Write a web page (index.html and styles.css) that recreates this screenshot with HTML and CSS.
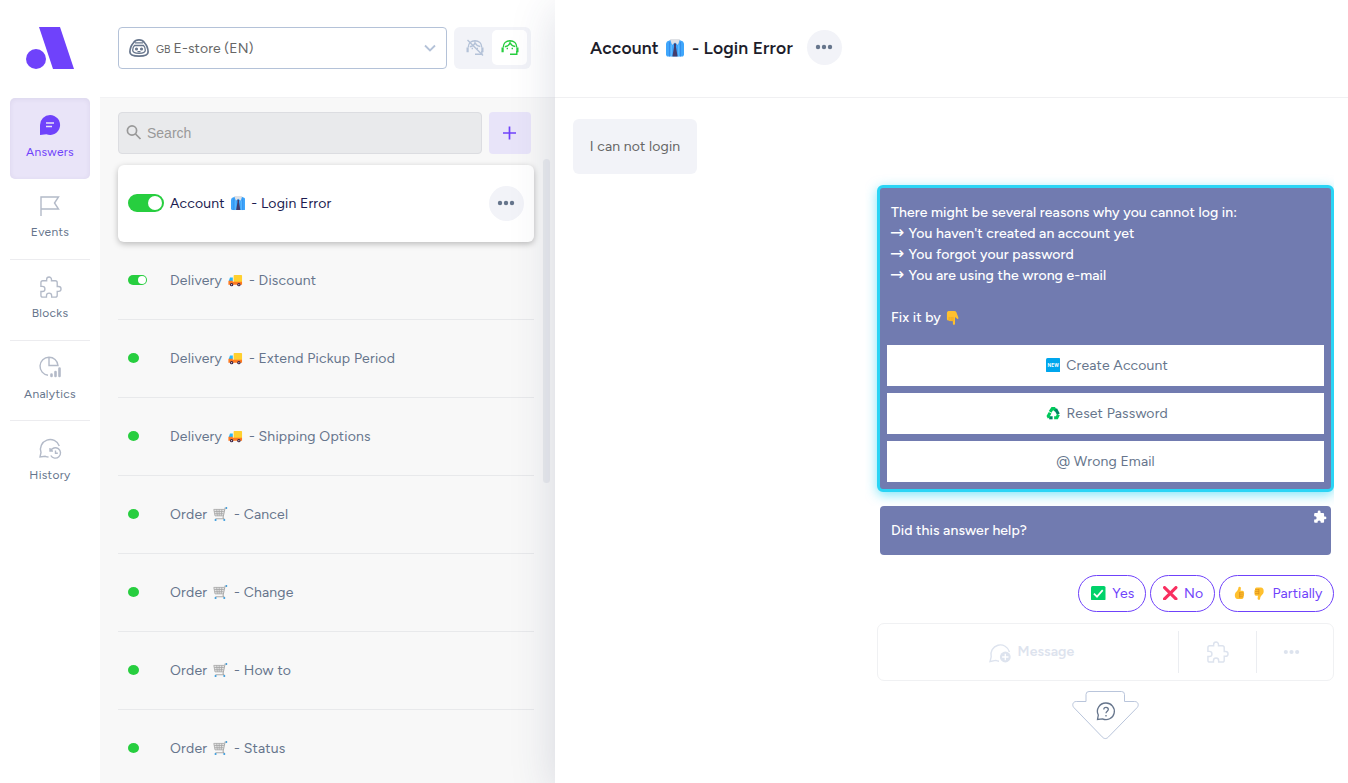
FILE: index.html
```html
<!DOCTYPE html>
<html lang="en">
<head>
    <meta charset="UTF-8">
    <meta name="viewport" content="width=device-width, initial-scale=1.0">
    <title>Answers - Account Login Error</title>
    <link rel="stylesheet" href="styles.css">
</head>
<body>
    <!-- Shared icons -->
    <svg class="sprite" aria-hidden="true">
        <symbol id="puzzle" viewBox="0 0 24 24">
            <path d="M20.5 11H19V7c0-1.1-.9-2-2-2h-4V3.500a2.500 2.500 0 0 0-5 0V5H4c-1.100 0-2 .9-2 2v3.800h1.500a2.700 2.700 0 0 1 0 5.400H2V20c0 1.100.9 2 2 2h3.800v-1.500a2.700 2.700 0 0 1 5.400 0V22H17c1.100 0 2-.9 2-2v-4h1.500a2.500 2.500 0 0 0 0-5z"/>
        </symbol>
        <symbol id="dots" viewBox="0 0 18 6">
            <circle cx="3" cy="3" r="2.200"/><circle cx="9" cy="3" r="2.200"/><circle cx="15" cy="3" r="2.200"/>
        </symbol>
        <symbol id="shirt" viewBox="0 0 18 18">
            <path fill="#3fa6fb" d="M1 2.500L4.500 1h9L17 2.500l1 2V16l-1 1.500H1L0 16V4.500z"/>
            <path stroke="#2f86e8" stroke-width=".8" d="M3.500 3v14.500M14.500 3v14.500"/>
            <path stroke="#71c6ff" stroke-width=".8" d="M5.300 6v11.500M12.700 6v11.500"/>
            <path fill="#dfe1e5" d="M4 0h10l-2 6-3-2.500L6 6z"/>
            <path fill="#453d6b" d="M7.900 4.500h2.200L9.900 7.500l1.700 10H6.400l1.700-10z"/>
        </symbol>
        <symbol id="truck" viewBox="0 0 18 16">
            <rect x="7" y="1.500" width="10.500" height="9.500" rx="1" fill="#ffd02f"/>
            <path fill="#29b6f6" d="M2.500 4.500H6V9H1z"/>
            <path fill="#ff7a21" d="M.5 8.500H6V10h11.500v3.500H.5z"/>
            <circle cx="4.500" cy="13.500" r="2.100" fill="#3b1e41"/><circle cx="13.500" cy="13.500" r="2.100" fill="#3b1e41"/>
            <circle cx="4.500" cy="13.500" r=".7" fill="#eee"/><circle cx="13.500" cy="13.500" r=".7" fill="#eee"/>
        </symbol>
        <symbol id="cart" viewBox="0 0 18 18">
            <path fill="#e4e4e4" d="M1 3h13l-1.500 8H2.500z"/>
            <path fill="none" stroke="#a5a5a5" stroke-width="1" d="M1 3h13M1.500 5.600h12M2 8.300h11M2.500 11h10M1 3l1.500 8M4.600 3l.8 8M7.700 3v8M11 3l-.8 8"/>
            <path fill="none" stroke="#aaa" stroke-width="1.300" d="M17 1.200h-2L12.500 13l1 1.700H3"/>
            <circle cx="3.200" cy="16.200" r="1.300" fill="#3a9bdc"/><circle cx="14" cy="16.200" r="1.300" fill="#3a9bdc"/><circle cx="16.800" cy="1.200" r="1.200" fill="#3a9bdc"/>
        </symbol>
        <symbol id="thumb" viewBox="0 0 16 18">
            <path fill="#ffc02e" d="M8.500.8c1.300 0 1.700 1.200 1.500 2.300L9.600 6H12c1.800 0 2 1.700 1.500 2.400.9.700.8 2 .1 2.500.6.800.3 2-.4 2.400.4 1-.4 2.700-2 2.700H6c-2.300 0-3.500-1.700-3.500-4.500 0-2.700 1.300-3.700 2.500-5C6.500 5 6.800 3.500 7 2c.1-.8.700-1.200 1.500-1.200z"/>
            <path fill="none" stroke="#d98a18" stroke-width=".9" d="M8.500 8.500h5M8.500 11h5M8.500 13.400h4.500M8.500 7.500v7"/>
        </symbol>
        <symbol id="headset" viewBox="0 0 18 18">
            <path d="M2.200 8.500C2.200 4.300 5.200 1.700 9 1.700s6.800 2.600 6.800 6.800M15.800 12v3.300H9M3.800 7.800c2.800-.4 4.500-1.800 5.200-4 1.200 2.300 3 3.500 5.300 3.700"/>
            <path stroke-width="2.200" d="M1.600 8.500v4.800M16.400 8.500v4.800"/>
            <path d="M6.300 8.800v1.500M11.300 8.800v1.500"/>
        </symbol>
    </svg>

    <div class="app">
        <!-- Main navigation -->
        <nav class="sidebar">
            <a href="#" class="logo">
                <svg width="48" height="42" viewBox="0 0 48 42" fill="#6f42fb"><circle cx="10" cy="32" r="10"/><path d="M13 0h21l14 42H27z"/></svg>
            </a>
            <a href="#" class="nav-item active">
                <svg width="22" height="22" viewBox="0 0 22 22"><path fill="#6f42fb" d="M11 1a10 10 0 1 1-3.600 19.300L1 21V11A10 10 0 0 1 11 1z"/><path class="lines" d="M7 9h8M7 12.500h6"/></svg>
                <span>Answers</span>
            </a>
            <a href="#" class="nav-item">
                <svg width="22" height="22" viewBox="0 0 22 22"><path d="M2 21V2h17.500l-4 6 4 6H2"/></svg>
                <span>Events</span>
            </a>
            <a href="#" class="nav-item">
                <svg width="23" height="23" viewBox="0 0 24 24"><use href="#puzzle"/></svg>
                <span>Blocks</span>
            </a>
            <a href="#" class="nav-item short">
                <svg width="22" height="22" viewBox="0 0 22 22"><path d="M9 19.200A9 9 0 1 1 19 9.500h-9V1.300"/><path stroke-width="2.600" stroke-linecap="round" d="M12.500 18.500v1.500M16.500 16v4M20.500 12.500V20"/></svg>
                <span>Analytics</span>
            </a>
            <a href="#" class="nav-item short">
                <svg width="24" height="24" viewBox="0 0 24 24"><path d="M10.500 21c-1.300 0-2.300-.3-3.200-.7L2 21l1-4.500A9.700 9.700 0 1 1 21.300 10M12 12v3h3M12.500 15a5.200 5.200 0 1 1 .3 4.500M17.500 14.500v2.700h2.300"/></svg>
                <span>History</span>
            </a>
        </nav>

        <!-- Answer list -->
        <section class="list-panel">
            <header class="list-header">
                <div class="bot-select">
                    <svg width="20" height="18" viewBox="0 0 20 18" fill="none" stroke="#66758c" stroke-width="1.700"><path d="M4.500 3.700C6 1.500 8 .9 10 .9s4 .6 5.500 2.800C17.500 6 19.100 9 19.100 13c0 3-3 4.100-9.100 4.100S.9 16 .9 13c0-4 1.600-7 3.600-9.300z"/><path stroke-width="1.300" d="M6 3.800h8M5.500 6.500h9c1.200 1 1.800 2.800 1.800 4.800 0 2.300-1.600 3-6.300 3s-6.300-.7-6.300-3c0-2 .6-3.800 1.800-4.800zM8.500 12.700h3"/><circle cx="7.500" cy="10" r=".7"/><circle cx="12.500" cy="10" r=".7"/></svg>
                    <span class="flag">GB</span>
                    <span class="bot-name">E-store (EN)</span>
                    <svg class="chevron" width="12" height="8" viewBox="0 0 12 8" fill="none" stroke="#b4c2d8" stroke-width="1.800"><path d="M1 1.500l5 5 5-5"/></svg>
                </div>
                <div class="live-toggle">
                    <button class="live-btn">
                        <svg width="18" height="18" viewBox="0 0 18 18"><use href="#headset"/><path d="M1.500 1l15.500 15.500"/></svg>
                    </button>
                    <button class="live-btn on">
                        <svg width="18" height="18"><use href="#headset"/></svg>
                    </button>
                </div>
            </header>

            <div class="search-row">
                <div class="search-box">
                    <svg width="16" height="16" viewBox="0 0 16 16" fill="none" stroke="#999" stroke-width="1.700"><circle cx="6" cy="5.500" r="4.600"/><path d="M9.500 9l5 5"/></svg>
                    <span>Search</span>
                </div>
                <button class="add-btn"><svg width="14" height="14" viewBox="0 0 14 14" stroke="#6f42fb" stroke-width="1.700"><path d="M6.500 .5v13M0 7h13"/></svg></button>
            </div>

            <div class="list-scroll">
                <div class="answer-list">
                    <div class="answer selected">
                        <div class="status"><i class="switch"></i></div>
                        <span>Account <svg class="emoji"><use href="#shirt"/></svg> - Login Error</span>
                        <button class="more-btn"><svg width="18" height="6"><use href="#dots"/></svg></button>
                    </div>
                    <div class="answer">
                        <div class="status"><i class="switch small"></i></div>
                        <span>Delivery <svg class="emoji"><use href="#truck"/></svg> - Discount</span>
                    </div>
                    <div class="answer">
                        <div class="status"><i class="dot"></i></div>
                        <span>Delivery <svg class="emoji"><use href="#truck"/></svg> - Extend Pickup Period</span>
                    </div>
                    <div class="answer">
                        <div class="status"><i class="dot"></i></div>
                        <span>Delivery <svg class="emoji"><use href="#truck"/></svg> - Shipping Options</span>
                    </div>
                    <div class="answer">
                        <div class="status"><i class="dot"></i></div>
                        <span>Order <svg class="emoji"><use href="#cart"/></svg> - Cancel</span>
                    </div>
                    <div class="answer">
                        <div class="status"><i class="dot"></i></div>
                        <span>Order <svg class="emoji"><use href="#cart"/></svg> - Change</span>
                    </div>
                    <div class="answer">
                        <div class="status"><i class="dot"></i></div>
                        <span>Order <svg class="emoji"><use href="#cart"/></svg> - How to</span>
                    </div>
                    <div class="answer">
                        <div class="status"><i class="dot"></i></div>
                        <span>Order <svg class="emoji"><use href="#cart"/></svg> - Status</span>
                    </div>
                </div>
                <div class="scrollbar"></div>
            </div>
        </section>

        <!-- Conversation editor -->
        <main class="editor">
            <header class="editor-header">
                <h1>Account <svg class="emoji"><use href="#shirt"/></svg> - Login Error</h1>
                <button class="more-btn"><svg width="18" height="6"><use href="#dots"/></svg></button>
            </header>

            <div class="conversation">
                <div class="user-message">I can not login</div>

                <div class="bot-column">
                    <div class="bot-frame">
                        <div class="bot-block">
                            <p>There might be several reasons why you cannot log in:<br>
                                <span class="arrow">→</span> You haven't created an account yet<br>
                                <span class="arrow">→</span> You forgot your password<br>
                                <span class="arrow">→</span> You are using the wrong e-mail<br>
                                <br>
                                Fix it by <svg class="emoji hand" viewBox="1 1 14.500 17"><path fill="#ffc02e" d="M4 1h6.500c2 0 2.500 1 3 2.500L15.500 9c.4 1.300-1.200 1.800-1.900.8L11.500 8v8c0 1.800-2.500 1.800-2.500 0v-3.500c-.7.9-2 .7-2.300 0-.7.7-2 .4-2.200-.5C3 12.500 2 11.500 2 10V4c0-2 .6-3 2-3z"/><path fill="none" stroke="#e39b1f" stroke-width=".8" d="M4.600 8v4M6.900 8v4.500M9.100 8v5"/></svg></p>
                            <div class="choice">
                                <svg class="emoji" viewBox="1 1 14 14"><rect x="1" y="1" width="14" height="14" rx="1.500" fill="#00a6ed"/><text x="8" y="9.800" text-anchor="middle" textLength="11" class="new-label">NEW</text></svg>
                                Create Account
                            </div>
                            <div class="choice">
                                <svg class="emoji" viewBox="0 0 16 16" fill="none" stroke="#00c95b" stroke-width="3.400"><path d="M4.500 6.500L7 2.800h2L10.500 5"/><path stroke="#008463" d="M10 6l1.500-1 2.200 4"/><path d="M13.700 9.500L12 13H9"/><path stroke="#008463" d="M7.300 13H3.500"/><path d="M3.500 13L2.500 11l2-3.500"/></svg>
                                Reset Password
                            </div>
                            <div class="choice">@ Wrong Email</div>
                        </div>
                    </div>

                    <div class="shared-block">
                        <span>Did this answer help?</span>
                        <svg class="shared-icon" width="14" height="14" fill="#fff"><use href="#puzzle"/></svg>
                    </div>

                    <div class="quick-replies">
                        <span class="reply"><svg class="emoji" viewBox="1 1 14 14"><rect x="1" y="1" width="14" height="14" rx="1.500" fill="#00d26a"/><path d="M3.800 8.300l3 3L12.300 5" fill="none" stroke="#fff" stroke-width="1.600"/></svg><b>Yes</b></span>
                        <span class="reply"><svg class="emoji" viewBox="1 1 14 14"><path d="M2.500 2.500l11 11M13.500 2.500l-11 11" stroke="#f92f60" stroke-width="3" stroke-linecap="round"/></svg><b>No</b></span>
                        <span class="reply"><svg class="emoji"><use href="#thumb"/></svg><svg class="emoji down"><use href="#thumb"/></svg><b>Partially</b></span>
                    </div>

                    <div class="add-bar">
                        <div class="add-message">
                            <svg width="22" height="22" viewBox="0 0 22 22"><path fill="none" stroke="#dde3ee" stroke-width="1.400" d="M10 20.200a9 9 0 0 1-3.300-.8L1 20.500l1.200-4.700A9.400 9.400 0 1 1 20.500 11"/><circle cx="16.300" cy="16" r="5.400" fill="#dde3ee"/><path stroke="#fff" stroke-width="1.300" d="M16.300 12.800v6.400M13.100 16h6.400"/></svg>
                            <span>Message</span>
                        </div>
                        <div class="add-option"><svg width="23" height="23" viewBox="0 0 24 24" fill="none" stroke="#dde3ee" stroke-width="1.500"><use href="#puzzle"/></svg></div>
                        <div class="add-option more"><svg width="17" height="6" fill="#dde3ee"><use href="#dots"/></svg></div>
                    </div>

                    <svg class="next-arrow" width="67" height="49" viewBox="0 0 67 49" fill="none">
                        <path stroke="#b9c5db" d="M17 .5h32.500a3 3 0 0 1 3 3v7h10.200c3.500 0 4.500 3.700 2.500 6L36.500 45.900c-2 2.200-4.300 2.200-6.300 0L1.800 16.500c-2-2.300-1-6 2.500-6H14v-7a3 3 0 0 1 3-3z"/>
                        <path stroke="#66758c" stroke-width="1.300" d="M34 12a8.300 8.300 0 1 1-3.500 15.800L25.500 28.500l.8-4.500A8.300 8.300 0 0 1 34 12z"/>
                        <path stroke="#66758c" stroke-width="1.300" d="M31.800 18.500c0-3 4.500-2.800 4.500 0 0 1.700-2.300 1.800-2.300 3.800M34 24v1.400"/>
                    </svg>
                </div>
            </div>
        </main>
    </div>
</body>
</html>
```
FILE: styles.css
```css
/* Base */
* {
    margin: 0;
    padding: 0;
    box-sizing: border-box;
}

body {
    font-family: Figtree, Inter, sans-serif;
    font-size: 14px;
    letter-spacing: 0.1px;
    color: #66758c;
    background-color: #fff;
    overflow: hidden;
}

svg {
    display: block;
    flex-shrink: 0;
}

button {
    border: none;
    display: flex;
    align-items: center;
    justify-content: center;
}

.sprite {
    position: absolute;
    width: 0;
    height: 0;
}

.emoji {
    display: inline-block;
    width: 14.5px;
    height: 14.5px;
    margin: 0 2.5px;
    vertical-align: -3px;
}

.app {
    display: flex;
    height: 783px;
}

/* Sidebar */
.sidebar {
    width: 100px;
    padding: 27px 10px 0;
    flex-shrink: 0;
}

.logo {
    display: block;
    height: 71px;
    padding-left: 16px;
}

.nav-item {
    display: flex;
    flex-direction: column;
    align-items: center;
    justify-content: space-between;
    height: 81px;
    padding: 16px 0 19px;
    border-bottom: 1px solid #ececef;
    color: #66758c;
    font-size: 12px;
    line-height: 16px;
    letter-spacing: 0.3px;
    text-decoration: none;
}

.nav-item.short {
    height: 80px;
    padding: 15px 0 18px;
}

.nav-item svg {
    fill: none;
    stroke: #b3bac8;
    stroke-width: 1.4;
}

.nav-item.active {
    border: none;
    border-radius: 5px;
    background-color: #e9e4f8;
    box-shadow: inset 0 1px 5px rgba(60, 50, 100, 0.08);
    color: #6f42fb;
}

.nav-item.active svg {
    stroke: none;
}

.nav-item.active .lines {
    stroke: #e9e4f8;
}

.nav-item:last-child {
    border: none;
}

/* Answer list */
.list-panel {
    width: 455px;
    flex-shrink: 0;
    background-color: #f8f8f8;
}

.list-header {
    display: flex;
    gap: 7px;
    height: 98px;
    padding: 27px 18px 28px;
    background-color: #fff;
    border-bottom: 1px solid #f2f2f4;
}

.bot-select {
    display: flex;
    align-items: center;
    width: 329px;
    height: 42px;
    padding: 0 10px;
    border: 1px solid #b4c2d8;
    border-radius: 4px;
    color: #666;
}

.flag {
    margin: 3px 3px 0 7px;
    font-size: 10.5px;
}

.chevron {
    margin-left: auto;
}

.live-toggle {
    display: flex;
    width: 77px;
    height: 42px;
    padding: 3px;
    border-radius: 6px;
    background-color: #f2f3f8;
}

.live-btn {
    width: 35px;
    height: 35px;
    border-radius: 5px;
    background: none;
    fill: none;
    stroke: #b4c2d8;
    stroke-width: 1.4;
}

.live-btn.on {
    background-color: #fff;
    stroke: #27ce3f;
}

.search-row {
    display: flex;
    gap: 7px;
    padding: 14px 24px 11px 18px;
}

.search-box {
    display: flex;
    align-items: center;
    gap: 5px;
    width: 364px;
    height: 42px;
    padding: 0 7px;
    border: 1px solid #dcdde1;
    border-radius: 4px;
    background-color: #e9eaec;
    color: #999;
    font-family: "Liberation Sans", Arial, sans-serif;
    letter-spacing: 0;
}

.add-btn {
    width: 42px;
    height: 42px;
    border-radius: 4px;
    background-color: #e8e4f9;
}

.list-scroll {
    display: flex;
    height: 618px;
    padding-left: 18px;
    gap: 9px;
}

.scrollbar {
    width: 7px;
    height: 324px;
    margin-top: -6px;
    border-radius: 4px;
    background-color: #e9eaee;
}

.answer-list {
    width: 416px;
}

.answer {
    display: flex;
    align-items: center;
    height: 78px;
    padding: 0 10px 1px;
    border-bottom: 1px solid #e8e9eb;
    color: #66758c;
    letter-spacing: 0.2px;
    white-space: nowrap;
}

.answer .status {
    width: 42px;
    padding-bottom: 1px;
}

.answer.selected {
    height: 77px;
    border: none;
    border-radius: 6px;
    background-color: #fff;
    box-shadow: 0 2px 6px rgba(0, 0, 0, 0.25);
    color: #1c1c50;
    letter-spacing: 0.15px;
}

.dot {
    display: block;
    width: 11px;
    height: 10px;
    border-radius: 50%;
    background-color: #27ce3f;
}

.switch {
    display: flex;
    justify-content: flex-end;
    width: 36px;
    height: 18px;
    padding: 2px;
    border-radius: 9px;
    background-color: #27ce3f;
}

.switch::after {
    content: '';
    width: 14px;
    height: 14px;
    border-radius: 50%;
    background-color: #fff;
}

.switch.small {
    width: 19px;
    height: 10px;
    padding: 1px;
}

.switch.small::after {
    width: 8px;
    height: 8px;
}

.more-btn {
    width: 35px;
    height: 35px;
    padding-right: 1px;
    border-radius: 50%;
    background-color: #f2f3f8;
    fill: #66758c;
}

.answer .more-btn {
    margin-left: auto;
}

/* Editor */
.editor {
    position: relative;
    flex: 1;
    background-color: #fff;
    box-shadow: 0 10px 42px rgba(50, 60, 100, 0.17);
}

.editor-header {
    display: flex;
    align-items: center;
    gap: 14px;
    height: 98px;
    padding: 0 35px 3px;
    border-bottom: 1px solid #f0f0f2;
}

.editor-header h1 {
    font-size: 17.5px;
    font-weight: 600;
    letter-spacing: 0.13px;
    color: #1d1d2b;
}

.editor-header .emoji {
    width: 18px;
    height: 18px;
    margin: 0 3.2px;
}

.conversation {
    padding: 21px 14px 0 18px;
}

.user-message {
    width: 124px;
    height: 55px;
    border-radius: 6px;
    background-color: #f2f3f8;
    color: #666;
    letter-spacing: 0.15px;
    line-height: 55px;
    text-align: center;
}

.bot-column {
    display: flex;
    flex-direction: column;
    width: 457px;
    margin: 0 0 0 auto;
}

/* The glow fades above and below the block but is cut off at its right edge */
.bot-frame {
    padding: 11px 0 14px 12px;
    margin-left: -12px;
    overflow: hidden;
}

.bot-block {
    height: 307px;
    padding: 14px 7px 0;
    border: 3px solid #2ad4f5;
    border-radius: 6px;
    background-color: #717bb0;
    box-shadow: 0 3px 12px rgba(42, 212, 245, 0.6);
}

.bot-block p {
    padding: 0 4px;
    margin-bottom: 17px;
    color: #fff;
    font-weight: 500;
    line-height: 21px;
}

.arrow {
    display: inline-block;
    width: 14px;
    font-family: "DejaVu Sans", sans-serif;
    font-size: 17px;
    font-weight: 400;
    line-height: 14px;
    text-indent: -1px;
}

.hand {
    margin-left: 1px;
}

.choice {
    display: flex;
    align-items: center;
    justify-content: center;
    gap: 3.8px;
    height: 41px;
    margin-bottom: 7px;
    padding-bottom: 1px;
    background-color: #fff;
    color: #66758c;
    letter-spacing: 0.15px;
}

.new-label {
    font-size: 4.5px;
    font-weight: 700;
    fill: #fff;
}

.shared-block {
    display: flex;
    justify-content: space-between;
    height: 49px;
    margin: 0 3px 20px;
    padding: 4px 4px 0 11px;
    border-radius: 4px;
    background-color: #717bb0;
    color: #fff;
    font-weight: 500;
    line-height: 41px;
}

.quick-replies {
    display: flex;
    justify-content: flex-end;
    gap: 4px;
    margin-bottom: 11px;
}

.reply {
    display: flex;
    align-items: center;
    height: 37px;
    padding: 0 10.5px 1px 10px;
    border: 1px solid #6f42fb;
    border-radius: 19px;
    color: #6f42fb;
}

.reply b {
    margin-left: 3.8px;
    font-weight: 400;
}

.reply .down {
    transform: rotate(180deg);
}

.add-bar {
    display: flex;
    align-items: center;
    height: 58px;
    margin-bottom: 10px;
    border: 1px solid #f0f1f3;
    border-radius: 7px;
    color: #dde3ee;
    font-weight: 600;
}

.add-message {
    display: flex;
    align-items: center;
    justify-content: center;
    gap: 7px;
    flex: 1;
    padding: 0 0 1px 7px;
}

.add-option {
    display: flex;
    align-items: center;
    justify-content: center;
    width: 78px;
    height: 42px;
    border-left: 1px solid #ebedf1;
}

.add-option.more {
    width: 77px;
    padding: 0 7px 1px 0;
}

.next-arrow {
    margin: 0 auto;
}
```
